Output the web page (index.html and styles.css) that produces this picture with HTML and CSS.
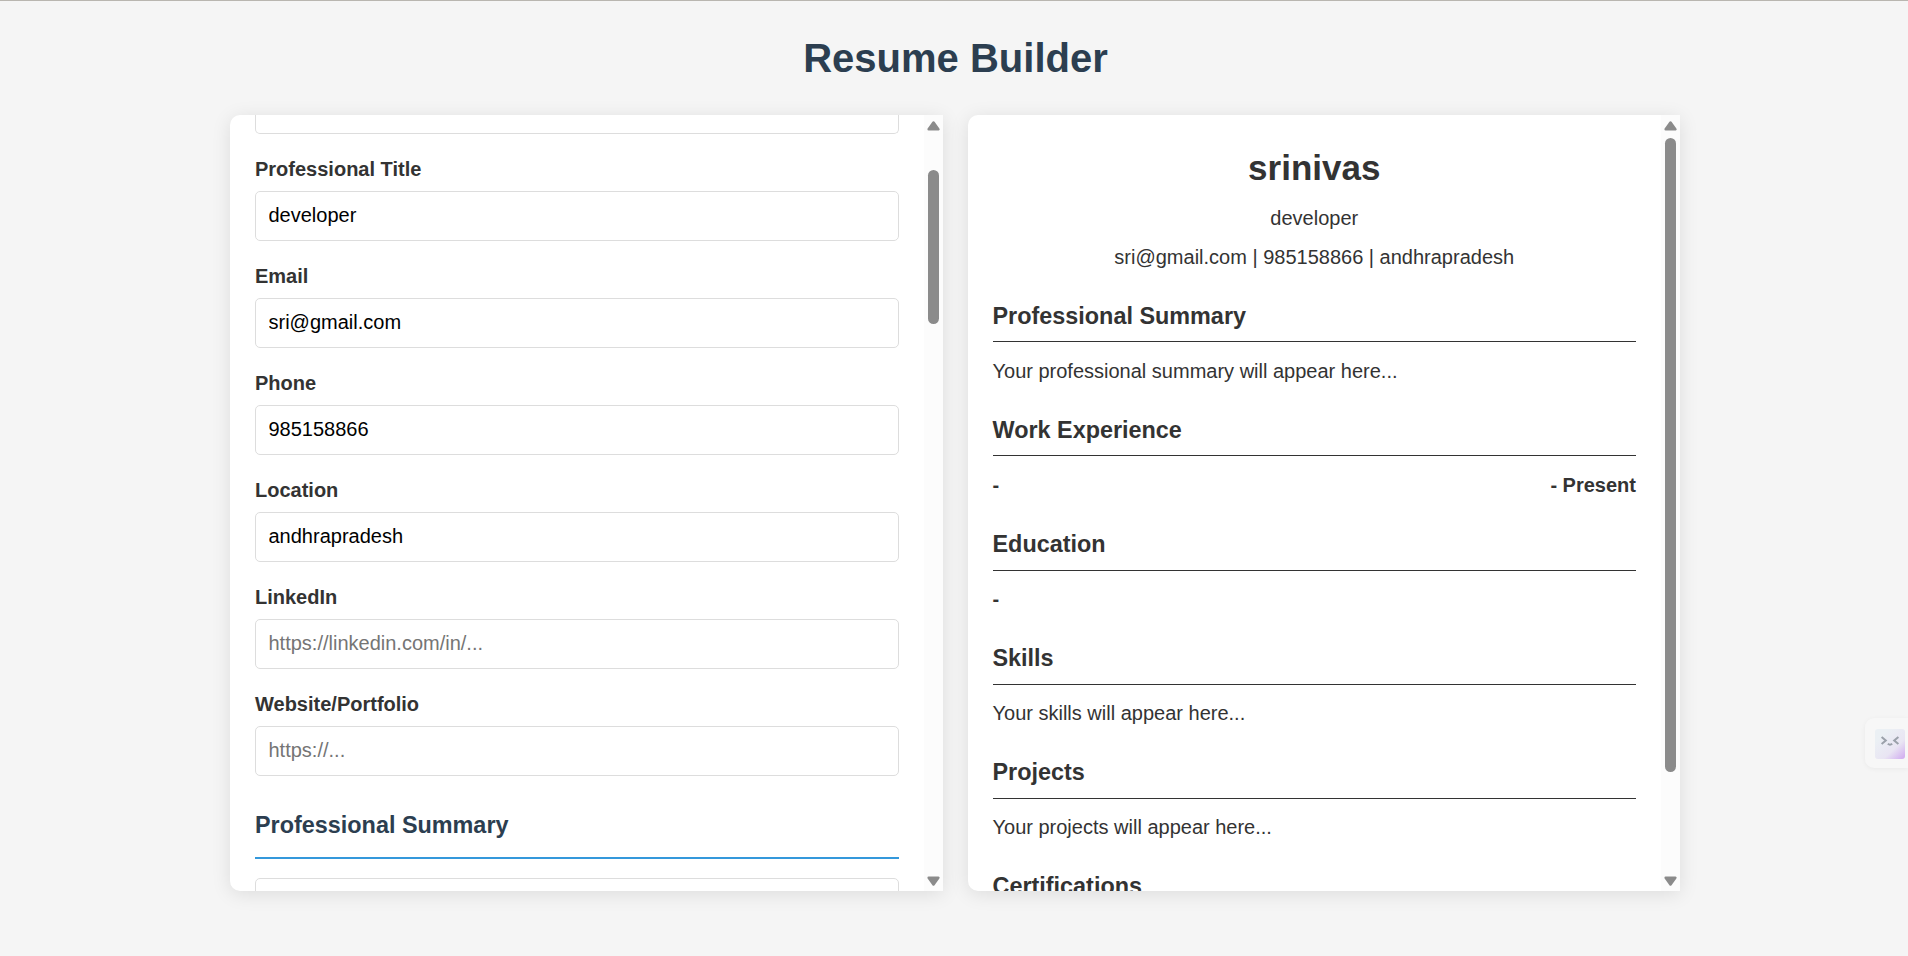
FILE: index.html
```html
<!DOCTYPE html>
<html lang="en">
<head>
<meta charset="utf-8">
<title>Resume Builder</title>
<link rel="stylesheet" href="styles.css">
</head>
<body>
<div class="container">
  <h1 class="title">Resume Builder</h1>
  <main class="panels">
    <section class="panel">
      <div class="content form">
        <div class="group"><input class="field clipped" type="text" aria-label="Full Name"></div>
        <div class="group"><label class="label" for="title">Professional Title</label><input class="field" id="title" type="text" value="developer"></div>
        <div class="group"><label class="label" for="email">Email</label><input class="field" id="email" type="email" value="sri@gmail.com"></div>
        <div class="group"><label class="label" for="phone">Phone</label><input class="field" id="phone" type="tel" value="985158866"></div>
        <div class="group"><label class="label" for="location">Location</label><input class="field" id="location" type="text" value="andhrapradesh"></div>
        <div class="group"><label class="label" for="linkedin">LinkedIn</label><input class="field" id="linkedin" type="url" placeholder="https://linkedin.com/in/..."></div>
        <div class="group"><label class="label" for="website">Website/Portfolio</label><input class="field" id="website" type="url" placeholder="https://..."></div>
        <h3 class="form-heading">Professional Summary</h3>
        <textarea class="field summary" aria-label="Summary"></textarea>
      </div>
      <div class="scrollbar">
        <svg class="arrow" viewBox="0 0 13 10"><path d="M6.5 1.5 11.3 8.3H1.7Z"/></svg>
        <div class="track track-form"><div class="thumb thumb-form"></div></div>
        <svg class="arrow" viewBox="0 0 13 10"><path d="M6.5 8.5 11.3 1.7H1.7Z"/></svg>
      </div>
    </section>
    <section class="panel">
      <div class="content resume">
        <header class="resume-header">
          <h2 class="name">srinivas</h2>
          <p class="line">developer</p>
          <p class="line">sri@gmail.com | 985158866 | andhrapradesh</p>
        </header>
        <div class="section"><h3 class="section-heading">Professional Summary</h3><p class="text">Your professional summary will appear here...</p></div>
        <div class="section"><h3 class="section-heading">Work Experience</h3><div class="entry"><span>-</span><span>- Present</span></div></div>
        <div class="section"><h3 class="section-heading">Education</h3><div class="entry"><span>-</span></div></div>
        <div class="section"><h3 class="section-heading">Skills</h3><p class="text">Your skills will appear here...</p></div>
        <div class="section"><h3 class="section-heading">Projects</h3><p class="text">Your projects will appear here...</p></div>
        <div class="section"><h3 class="section-heading">Certifications</h3></div>
      </div>
      <div class="scrollbar">
        <svg class="arrow" viewBox="0 0 13 10"><path d="M6.5 1.5 11.3 8.3H1.7Z"/></svg>
        <div class="track"><div class="thumb thumb-resume"></div></div>
        <svg class="arrow" viewBox="0 0 13 10"><path d="M6.5 8.5 11.3 1.7H1.7Z"/></svg>
      </div>
    </section>
  </main>
</div>
<div class="assistant">
  <svg class="face" viewBox="0 0 30 30">
    <defs><linearGradient id="tint" x1="0.25" y1="0.2" x2="1" y2="1"><stop offset="0" stop-color="#ebf0f4"/><stop offset="0.55" stop-color="#e9e5f3"/><stop offset="1" stop-color="#cfa8f0"/></linearGradient></defs>
    <rect width="30" height="30" rx="3" fill="url(#tint)"/>
    <path d="M6.6 8 10.8 11.5 6.6 15M23.4 8 19.2 11.5 23.4 15M12.8 14.8Q15 16.6 17.2 14.8" fill="none" stroke="#9ba1aa" stroke-width="2"/>
  </svg>
</div>
</body>
</html>
```
FILE: styles.css
```css
* { box-sizing: border-box; margin: 0; padding: 0; }

body {
  height: 956px;
  overflow: hidden;
  border-top: 1px solid #b9b6b0;
  background: #f5f5f5;
  color: #333;
  font: 20px/1.6 "Liberation Sans", Arial, sans-serif;
}

.container { width: 1450px; margin-left: 230px; padding-top: 25px; }

.title {
  margin-bottom: 25px;
  padding-left: 1px;
  color: #2c3e50;
  font-size: 40px;
  text-align: center;
}

.panels { display: grid; grid-template-columns: 713px 712px; gap: 25px; }

.panel {
  display: flex;
  height: 776px;
  overflow: hidden;
  border-radius: 10px 0 0 10px;
  background: #fff;
  box-shadow: 0 3px 19px rgba(0, 0, 0, 0.1);
}

.content { flex: 1; min-width: 0; height: 776px; overflow: hidden; padding: 0 25px; }

.label { display: block; margin-bottom: 6.25px; font-weight: bold; }
.group { height: 88.25px; margin-bottom: 18.75px; }
.group:first-child { height: 19px; }
.group:last-of-type { margin-bottom: 31.25px; }

.field {
  display: block;
  width: 100%;
  height: 50px;
  padding: 11.5px 12.5px 13.5px;
  border: 1px solid #ddd;
  border-radius: 5px;
  outline: none;
  background: #fff;
  color: #000;
  font: 20px "Liberation Sans", Arial, sans-serif;
}
.field::placeholder { color: #757575; opacity: 1; }
.clipped { height: 19px; padding: 0; border-top: 0; border-radius: 0 0 5px 5px; }
.summary { height: 125px; resize: none; }

.form-heading {
  margin-bottom: 18.75px;
  padding-bottom: 12.5px;
  border-bottom: 2px solid #3498db;
  color: #2c3e50;
  font-size: 23.4px;
}

.resume { padding: 25px 25px 0 24.5px; }
.resume-header { margin-bottom: 25px; text-align: center; }
.name { font-size: 35px; }
.line { margin-top: 6.25px; }
.section { margin-bottom: 25px; }
.section-heading {
  margin-bottom: 12.5px;
  padding-bottom: 6.25px;
  border-bottom: 1px solid #333;
  font-size: 23.4px;
}
.entry { display: flex; justify-content: space-between; font-weight: bold; }

.scrollbar {
  display: flex;
  flex-direction: column;
  align-items: center;
  width: 19px;
  padding: 6px 0 5px;
  background: #fcfcfc;
}
.arrow { width: 13px; height: 10px; fill: #8b8b8b; stroke: #8b8b8b; stroke-width: 2.6; stroke-linejoin: round; }
.track { flex: 1; padding-top: 7px; }
.track-form { padding-top: 39px; }
.thumb { width: 11px; border-radius: 6px; background: #8b8b8b; }
.thumb-form { height: 154px; }
.thumb-resume { height: 634px; }

.assistant {
  position: absolute;
  top: 718px;
  right: 0;
  width: 43px;
  height: 50px;
  padding: 11px 3px 9px 10px;
  border-radius: 9px 0 0 9px;
  background: #f7f7f7;
  box-shadow: 0 1px 5px rgba(0, 0, 0, 0.05);
}
.face { display: block; width: 30px; height: 30px; }
```
